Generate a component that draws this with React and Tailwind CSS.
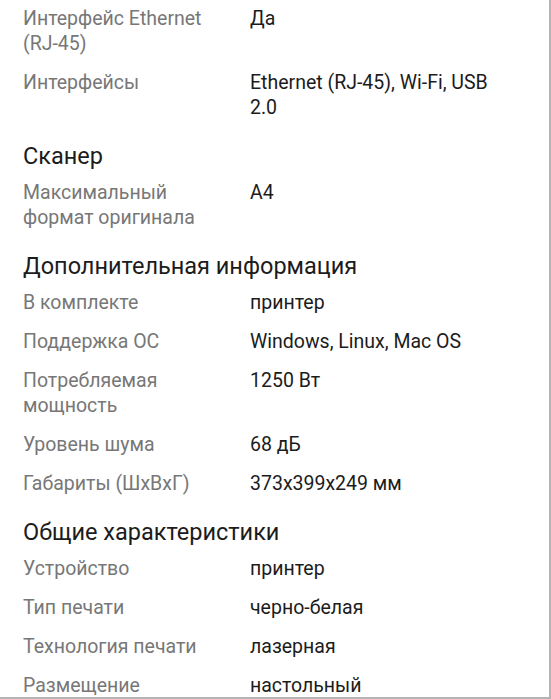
import React from 'react';

const sections = [
  {
    title: null,
    rows: [
      ['Интерфейс Ethernet (RJ-45)', 'Да'],
      ['Интерфейсы', 'Ethernet (RJ-45), Wi-Fi, USB 2.0'],
    ],
  },
  {
    title: 'Сканер',
    rows: [['Максимальный формат оригинала', 'A4']],
  },
  {
    title: 'Дополнительная информация',
    rows: [
      ['В комплекте', 'принтер'],
      ['Поддержка ОС', 'Windows, Linux, Mac OS'],
      ['Потребляемая мощность', '1250 Вт'],
      ['Уровень шума', '68 дБ'],
      ['Габариты (ШхВхГ)', '373x399x249 мм'],
    ],
  },
  {
    title: 'Общие характеристики',
    rows: [
      ['Устройство', 'принтер'],
      ['Тип печати', 'черно-белая'],
      ['Технология печати', 'лазерная'],
      ['Размещение', 'настольный'],
    ],
  },
];

function SpecRow({ label, value }) {
  return (
    <div className="flex py-[7px] text-[19.5px] leading-[25px]">
      <div className="w-[227px] shrink-0 pr-[22px] text-[#777777]">{label}</div>
      <div className="w-[262px] text-[#1c1c1c]">{value}</div>
    </div>
  );
}

export default function App() {
  return (
    <div className="w-[551px] h-[699px] overflow-hidden bg-white border-r-2 border-b-2 border-[#b4b4b4]" style={{ fontFamily: 'Roboto, "Noto Sans", sans-serif' }}>
      <div className="pl-[23px] -mt-[1px]">
        {sections.map((section, i) => (
          <div key={i}>
            {section.title && (
              <h2 className="mt-[12px] text-[23.5px] leading-[34px] text-[#1c1c1c]">{section.title}</h2>
            )}
            {section.rows.map(([label, value]) => (
              <SpecRow key={label} label={label} value={value} />
            ))}
          </div>
        ))}
      </div>
    </div>
  );
}
